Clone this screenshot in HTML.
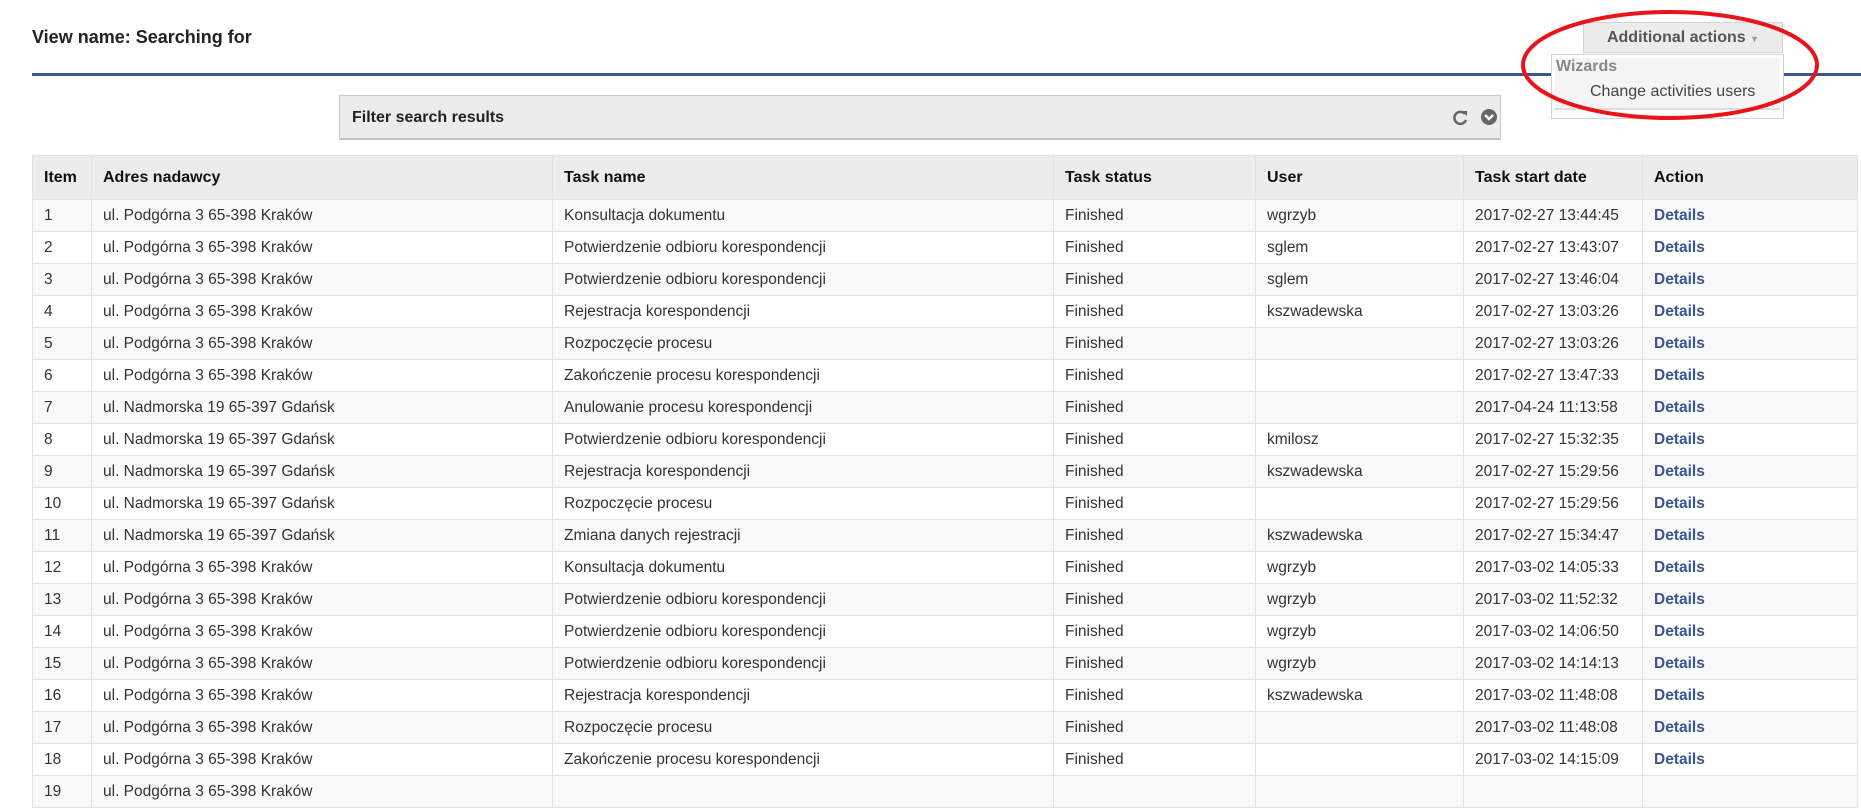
<!DOCTYPE html>
<html><head><meta charset="utf-8"><style>
body{margin:0;width:1861px;height:779px;overflow:hidden;background:#fff;font-family:"Liberation Sans","DejaVu Sans",sans-serif;color:#333;position:relative}
.title{position:absolute;left:32px;top:27px;font-weight:bold;font-size:18px;color:#222}
.line{position:absolute;left:32px;top:73px;width:1829px;height:3px;background:#3c5590}
.filter{position:absolute;left:339px;top:95px;width:1162px;height:45px;background:#ececec;border:1px solid #ccc;border-bottom:2px solid #c4c4c4;box-sizing:border-box}
.filter span{position:absolute;left:12px;top:13px;font-weight:bold;font-size:16px;color:#222}
table{position:absolute;left:32px;top:155px;border-collapse:collapse;font-size:15.5px;table-layout:fixed;width:1825px}
th,td{border:1px solid #e3e3e3;text-align:left;padding:0 0 0 11px;white-space:nowrap;overflow:hidden}
th{background:#ececec;height:43px;font-weight:bold;color:#111;font-size:16px}
td{height:31px}
tr:nth-child(even) td{background:#f9f9f9}
td a{color:#3a5592;font-weight:bold;text-decoration:none}
.btn{position:absolute;left:1583px;top:22px;width:200px;height:31px;background:#ececec;border:1px solid #d4d4d4;box-sizing:border-box;font-weight:bold;font-size:16px;color:#555;text-align:center;line-height:30px}
.menu{position:absolute;left:1551px;top:54px;width:233px;height:65px;background:#fff;border:1px solid #d4d4d4;box-sizing:border-box}
.menu .in{position:absolute;left:3px;top:3px;right:3px;bottom:8px;background:#f5f5f5;border-bottom:2px solid #ddd}
.menu .w{position:absolute;left:4px;top:3px;font-weight:bold;font-size:16px;color:#888}
.menu .c{position:absolute;left:38px;top:28px;font-size:16px;color:#444}
</style></head><body>
<div class="title">View name: Searching for</div>
<div class="line"></div>
<div class="filter"><span>Filter search results</span>
<svg style="position:absolute;left:1111px;top:13px" width="18" height="18" viewBox="0 0 18 18"><path d="M14 5A6 6 0 1 0 15 11" fill="none" stroke="#666" stroke-width="2.5"/><path d="M11 2L16 2L16 7Z" fill="#666"/></svg>
<svg style="position:absolute;left:1140px;top:12px" width="18" height="18" viewBox="0 0 18 18"><circle cx="9" cy="9" r="8" fill="#666"/><path d="M5 7L9 11L13 7" fill="none" stroke="#fff" stroke-width="2.5"/></svg>
</div>
<table>
<colgroup><col style="width:59px"><col style="width:461px"><col style="width:501px"><col style="width:202px"><col style="width:208px"><col style="width:179px"><col style="width:215px"></colgroup>
<tr><th>Item</th><th>Adres nadawcy</th><th>Task name</th><th>Task status</th><th>User</th><th>Task start date</th><th>Action</th></tr>
<tr><td>1</td><td>ul. Podgórna 3 65-398 Kraków</td><td>Konsultacja dokumentu</td><td>Finished</td><td>wgrzyb</td><td>2017-02-27 13:44:45</td><td><a>Details</a></td></tr>
<tr><td>2</td><td>ul. Podgórna 3 65-398 Kraków</td><td>Potwierdzenie odbioru korespondencji</td><td>Finished</td><td>sglem</td><td>2017-02-27 13:43:07</td><td><a>Details</a></td></tr>
<tr><td>3</td><td>ul. Podgórna 3 65-398 Kraków</td><td>Potwierdzenie odbioru korespondencji</td><td>Finished</td><td>sglem</td><td>2017-02-27 13:46:04</td><td><a>Details</a></td></tr>
<tr><td>4</td><td>ul. Podgórna 3 65-398 Kraków</td><td>Rejestracja korespondencji</td><td>Finished</td><td>kszwadewska</td><td>2017-02-27 13:03:26</td><td><a>Details</a></td></tr>
<tr><td>5</td><td>ul. Podgórna 3 65-398 Kraków</td><td>Rozpoczęcie procesu</td><td>Finished</td><td></td><td>2017-02-27 13:03:26</td><td><a>Details</a></td></tr>
<tr><td>6</td><td>ul. Podgórna 3 65-398 Kraków</td><td>Zakończenie procesu korespondencji</td><td>Finished</td><td></td><td>2017-02-27 13:47:33</td><td><a>Details</a></td></tr>
<tr><td>7</td><td>ul. Nadmorska 19 65-397 Gdańsk</td><td>Anulowanie procesu korespondencji</td><td>Finished</td><td></td><td>2017-04-24 11:13:58</td><td><a>Details</a></td></tr>
<tr><td>8</td><td>ul. Nadmorska 19 65-397 Gdańsk</td><td>Potwierdzenie odbioru korespondencji</td><td>Finished</td><td>kmilosz</td><td>2017-02-27 15:32:35</td><td><a>Details</a></td></tr>
<tr><td>9</td><td>ul. Nadmorska 19 65-397 Gdańsk</td><td>Rejestracja korespondencji</td><td>Finished</td><td>kszwadewska</td><td>2017-02-27 15:29:56</td><td><a>Details</a></td></tr>
<tr><td>10</td><td>ul. Nadmorska 19 65-397 Gdańsk</td><td>Rozpoczęcie procesu</td><td>Finished</td><td></td><td>2017-02-27 15:29:56</td><td><a>Details</a></td></tr>
<tr><td>11</td><td>ul. Nadmorska 19 65-397 Gdańsk</td><td>Zmiana danych rejestracji</td><td>Finished</td><td>kszwadewska</td><td>2017-02-27 15:34:47</td><td><a>Details</a></td></tr>
<tr><td>12</td><td>ul. Podgórna 3 65-398 Kraków</td><td>Konsultacja dokumentu</td><td>Finished</td><td>wgrzyb</td><td>2017-03-02 14:05:33</td><td><a>Details</a></td></tr>
<tr><td>13</td><td>ul. Podgórna 3 65-398 Kraków</td><td>Potwierdzenie odbioru korespondencji</td><td>Finished</td><td>wgrzyb</td><td>2017-03-02 11:52:32</td><td><a>Details</a></td></tr>
<tr><td>14</td><td>ul. Podgórna 3 65-398 Kraków</td><td>Potwierdzenie odbioru korespondencji</td><td>Finished</td><td>wgrzyb</td><td>2017-03-02 14:06:50</td><td><a>Details</a></td></tr>
<tr><td>15</td><td>ul. Podgórna 3 65-398 Kraków</td><td>Potwierdzenie odbioru korespondencji</td><td>Finished</td><td>wgrzyb</td><td>2017-03-02 14:14:13</td><td><a>Details</a></td></tr>
<tr><td>16</td><td>ul. Podgórna 3 65-398 Kraków</td><td>Rejestracja korespondencji</td><td>Finished</td><td>kszwadewska</td><td>2017-03-02 11:48:08</td><td><a>Details</a></td></tr>
<tr><td>17</td><td>ul. Podgórna 3 65-398 Kraków</td><td>Rozpoczęcie procesu</td><td>Finished</td><td></td><td>2017-03-02 11:48:08</td><td><a>Details</a></td></tr>
<tr><td>18</td><td>ul. Podgórna 3 65-398 Kraków</td><td>Zakończenie procesu korespondencji</td><td>Finished</td><td></td><td>2017-03-02 14:15:09</td><td><a>Details</a></td></tr>
<tr><td>19</td><td>ul. Podgórna 3 65-398 Kraków</td><td></td><td></td><td></td><td></td><td></td></tr>
</table>
<div class="btn">Additional actions <span style="font-size:9px;color:#999">&#9660;</span></div>
<div class="menu"><div class="in"></div><div class="w">Wizards</div><div class="c">Change activities users</div></div>
<svg style="position:absolute;left:0;top:0" width="1861" height="779"><ellipse cx="1670" cy="65" rx="147" ry="53" fill="none" stroke="#e8141c" stroke-width="4"/></svg>
</body></html>
